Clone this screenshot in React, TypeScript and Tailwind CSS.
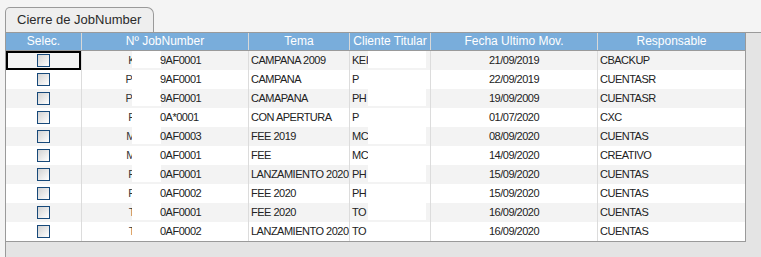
import React from 'react';

type Row = {
  prefix: string;
  code: string;
  tema: string;
  cliente: string;
  fecha: string;
  responsable: string;
};

const rows: Row[] = [
  { prefix: 'K', code: '9AF0001', tema: 'CAMPANA 2009', cliente: 'KEI', fecha: '21/09/2019', responsable: 'CBACKUP' },
  { prefix: 'PI', code: '9AF0001', tema: 'CAMPANA', cliente: 'P', fecha: '22/09/2019', responsable: 'CUENTASR' },
  { prefix: 'PI', code: '9AF0001', tema: 'CAMAPANA', cliente: 'PH', fecha: '19/09/2009', responsable: 'CUENTASR' },
  { prefix: 'P', code: '0A*0001', tema: 'CON APERTURA', cliente: 'P', fecha: '01/07/2020', responsable: 'CXC' },
  { prefix: 'M', code: '0AF0003', tema: 'FEE 2019', cliente: 'MC', fecha: '08/09/2020', responsable: 'CUENTAS' },
  { prefix: 'M', code: '0AF0001', tema: 'FEE', cliente: 'MC', fecha: '14/09/2020', responsable: 'CREATIVO' },
  { prefix: 'P', code: '0AF0001', tema: 'LANZAMIENTO 2020', cliente: 'PH', fecha: '15/09/2020', responsable: 'CUENTAS' },
  { prefix: 'P', code: '0AF0002', tema: 'FEE 2020', cliente: 'PH', fecha: '15/09/2020', responsable: 'CUENTAS' },
  { prefix: 'T', code: '0AF0001', tema: 'FEE 2020', cliente: 'TO', fecha: '16/09/2020', responsable: 'CUENTAS' },
  { prefix: 'T', code: '0AF0002', tema: 'LANZAMIENTO 2020', cliente: 'TO', fecha: '16/09/2020', responsable: 'CUENTAS' },
];

const headers = [
  { label: 'Selec.', width: 'w-[75px]' },
  { label: 'Nº JobNumber', width: 'w-[167px]' },
  { label: 'Tema', width: 'w-[101px]' },
  { label: 'Cliente Titular', width: 'w-[81px]' },
  { label: 'Fecha Ultimo Mov.', width: 'w-[167px]' },
  { label: 'Responsable', width: 'w-[148px]' },
];

function Checkbox() {
  return (
    <div className="w-[13px] h-[13px] border-[1.5px] border-[#17497a] bg-gradient-to-br from-[#d2d2d2] to-white" />
  );
}

export default function App() {
  return (
    <div className="w-[761px] h-[257px] bg-[#f4f4f4] pt-[7px] overflow-hidden font-['Liberation_Sans',Arial,sans-serif] text-[#222]">
      <div className="ml-[5px] w-[149px] h-[25px] border border-b-0 border-[#9a9a9a] rounded-tl-[5px] rounded-tr-[7px] bg-[#eeeeee] pl-[11px] pt-[4px] text-[13px] leading-[16px] text-[#2a2a2a]">
        Cierre de JobNumber
      </div>
      <div className="ml-[5px] h-[226px] border-l border-t border-[#9a9a9a] bg-[#e4e4e4]">
        <div className="w-[740px] border-r border-b border-[#9a9a9a] bg-white">
          <div className="flex h-[18px] bg-[#79addb] border-b border-[#9a9a9a]">
            {headers.map((header, index) => (
              <div
                key={header.label}
                className={`${header.width} ${index > 0 ? 'border-l border-[#d8d8d8]' : ''} shrink-0 flex items-center justify-center text-[12px] leading-[17px] text-white whitespace-nowrap overflow-hidden`}
              >
                {header.label}
              </div>
            ))}
          </div>

          {rows.map((row, index) => (
            <div key={index} className={`flex h-[19px] text-[11px] tracking-[-0.5px] leading-[19px] ${index % 2 === 0 ? 'bg-[#f3f3f3]' : 'bg-white'}`}>
              <div className={`w-[75px] shrink-0 flex items-center justify-center ${index === 0 ? 'border-2 border-black' : ''}`}>
                <Checkbox />
              </div>
              <div className="w-[167px] shrink-0 border-l border-[#dcdcdc] relative overflow-hidden">
                <span className="absolute right-[113px] top-0 text-[#333]">{row.prefix}</span>
                <div className="absolute left-[50px] top-0 w-[29px] h-[17px] bg-white" />
                <span className="absolute left-[78px] top-0">{row.code}</span>
              </div>
              <div className="w-[101px] shrink-0 border-l border-[#dcdcdc] pl-[2px] whitespace-nowrap overflow-hidden">{row.tema}</div>
              <div className="w-[81px] shrink-0 border-l border-[#dcdcdc] pl-[2px] relative overflow-hidden">
                <span>{row.cliente}</span>
                <div className="absolute left-[18px] top-0 w-[58px] h-[17px] bg-white" />
              </div>
              <div className="w-[167px] shrink-0 border-l border-[#dcdcdc] text-center">{row.fecha}</div>
              <div className="w-[148px] shrink-0 border-l border-[#dcdcdc] pl-[2px]">{row.responsable}</div>
            </div>
          ))}
        </div>
      </div>
    </div>
  );
}
